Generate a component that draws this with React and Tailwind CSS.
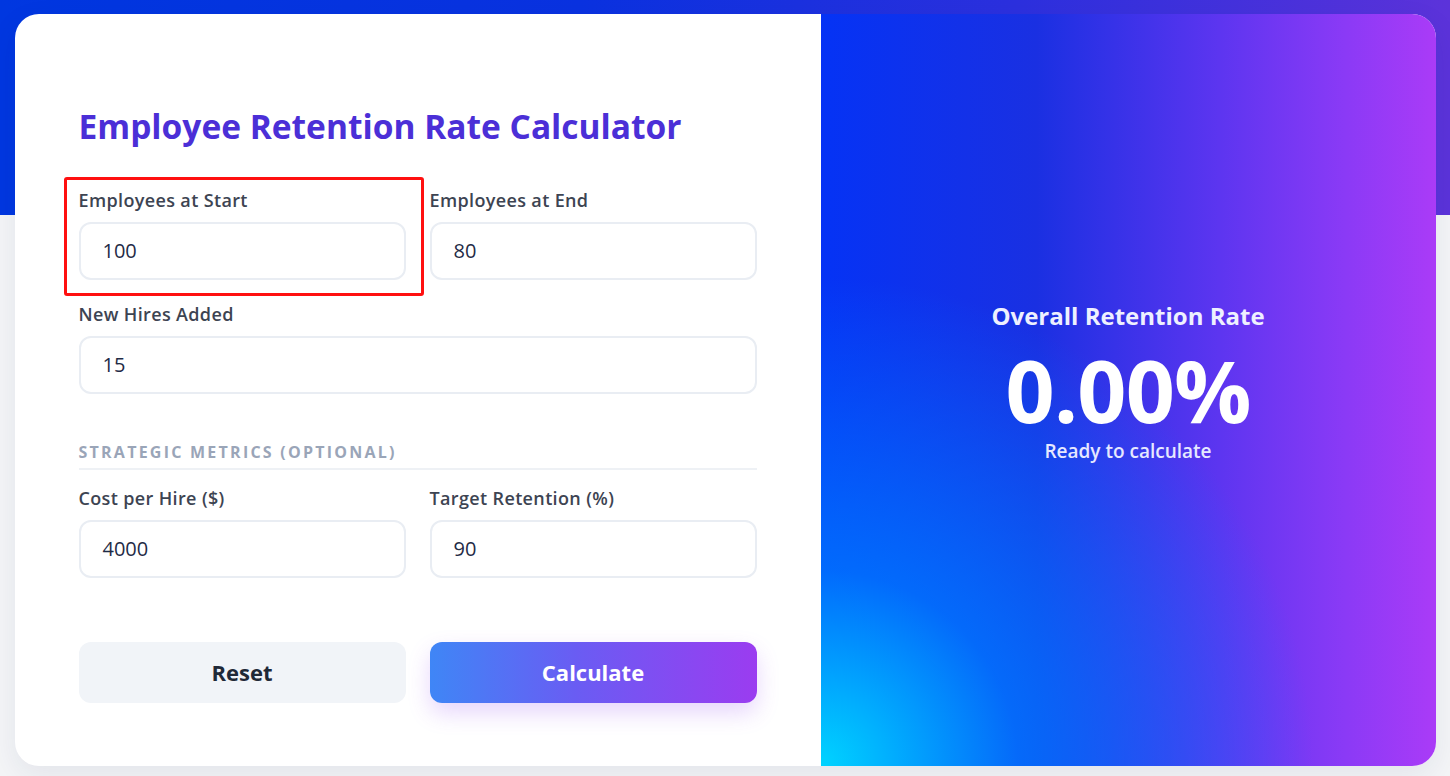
import React from "react";

function Field({ label, value, highlight }) {
  return (
    <div className="relative flex flex-col">
      {highlight && (
        <div className="pointer-events-none absolute -left-[15px] -right-[18px] -top-[13px] -bottom-[16px] rounded-[3px] border-[3px] border-[#ff1010]" />
      )}
      <label className="text-[18px] font-semibold leading-5 tracking-[0.02em] text-[#3d4452]">{label}</label>
      <div className="mt-3 flex h-[58px] items-center rounded-xl border-2 border-[#e9edf3] bg-white px-[22px] text-[20px] text-[#1f2b46]">
        {value}
      </div>
    </div>
  );
}

export default function App() {
  return (
    <div
      className="min-h-[776px] w-full bg-[#f4f5f7] bg-[linear-gradient(90deg,#0037e0_0%,#0a32e0_40%,#2c30de_70%,#5c33da_100%)] bg-[length:100%_215px] bg-no-repeat px-[14px] pt-[14px] pb-[10px]"
      style={{ fontFamily: "'Open Sans', 'Noto Sans', sans-serif" }}
    >
      <div className="mx-auto flex h-[752px] w-[1421px] overflow-hidden rounded-3xl bg-white shadow-[0_10px_30px_rgba(30,40,90,0.08)]">
        {/* Left form panel */}
        <div className="flex w-[806px] flex-col px-16 pt-[86px]">
          <h1 className="text-[33.5px] font-bold leading-[52px] text-[#4b2fd7]">
            Employee Retention Rate Calculator
          </h1>

          <div className="mt-[38px] grid grid-cols-2 gap-x-6 gap-y-6">
            <Field label="Employees at Start" value="100" highlight />
            <Field label="Employees at End" value="80" />
            <div className="col-span-2">
              <Field label="New Hires Added" value="15" />
            </div>
          </div>

          <div className="mt-[48px] border-b-2 border-[#eef1f5] pb-[6px] text-[16px] font-bold uppercase leading-5 tracking-[0.14em] text-[#9aa5b8]">
            Strategic Metrics (Optional)
          </div>

          <div className="mt-[18px] grid grid-cols-2 gap-x-6">
            <Field label="Cost per Hire ($)" value="4000" />
            <Field label="Target Retention (%)" value="90" />
          </div>

          <div className="mt-16 grid grid-cols-2 gap-x-6">
            <button className="h-[61px] rounded-xl bg-[#f1f4f8] text-[22px] font-bold text-[#1f2937]">
              Reset
            </button>
            <button className="h-[61px] rounded-xl bg-[linear-gradient(90deg,#3f86f6_0%,#6a5cf3_45%,#9b3cf0_100%)] text-[22px] font-bold text-white shadow-[0_10px_22px_rgba(147,70,240,0.22)]">
              Calculate
            </button>
          </div>
        </div>

        {/* Right result panel */}
        <div className="flex flex-1 flex-col items-center justify-center bg-[radial-gradient(ellipse_80%_65%_at_0%_100%,#00d4ff_0%,rgba(0,120,255,0.8)_40%,rgba(0,60,240,0)_100%),linear-gradient(90deg,#0533f5_0%,#1a30e2_35%,#5d35f0_65%,#8a3af6_85%,#aa3bf7_100%)] pb-4 text-white">
          <div className="text-[24px] font-bold leading-[30px] text-[#eef0ff]">Overall Retention Rate</div>
          <div className="mt-[15px] text-[86px] font-bold leading-[88px] tracking-[-0.01em]">0.00%</div>
          <div className="mt-[4px] text-[19px] font-semibold leading-[26px] text-[#e6e8ff]">Ready to calculate</div>
        </div>
      </div>
    </div>
  );
}
